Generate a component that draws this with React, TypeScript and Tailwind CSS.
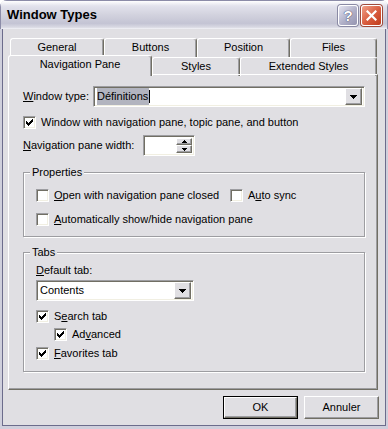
import React from "react";

const font = { fontFamily: '"Liberation Sans", Arial, sans-serif' };

function Check() {
  const px: [number, number, number][] = [
    [6, 0, 1], [5, 1, 2], [0, 2, 1], [4, 2, 3], [0, 3, 2], [3, 3, 3], [0, 4, 5], [1, 5, 3], [2, 6, 1],
  ];
  return (
    <svg width="7" height="7" viewBox="0 0 7 7" shapeRendering="crispEdges">
      {px.map(([x, y, w], i) => (
        <rect key={i} x={x} y={y} width={w} height={1} fill="#000" />
      ))}
    </svg>
  );
}

function CheckBox({ checked, children }: { checked?: boolean; children: React.ReactNode }) {
  return (
    <div className="flex h-[13px] items-center">
      <div className="flex h-[13px] w-[13px] items-center justify-center border border-t-[#9d9da1] border-l-[#9d9da1] border-r-white border-b-white bg-white shadow-[inset_1px_1px_0_#716f64,inset_-1px_-1px_0_#f1efe2]">
        {checked && <Check />}
      </div>
      <span className="ml-[5px] text-[11px] leading-[13px] text-black">{children}</span>
    </div>
  );
}

function Arrow() {
  return (
    <svg width="7" height="4" viewBox="0 0 7 4" shapeRendering="crispEdges">
      <path d="M0 0h7v1H6v1H5v1H4v1H3V3H2V2H1V1H0z" fill="#000" />
    </svg>
  );
}

const raised =
  "border border-t-white border-l-white border-r-[#716f64] border-b-[#716f64] bg-[#e0dfe3] shadow-[inset_-1px_-1px_0_#9d9da1]";
const sunken =
  "border border-t-[#9d9da1] border-l-[#9d9da1] border-r-white border-b-white shadow-[inset_1px_1px_0_#716f64,inset_-1px_-1px_0_#f1efe2]";

function Combo({ width, children }: { width: string; children: React.ReactNode }) {
  return (
    <div className={`flex h-[21px] items-center bg-white p-[2px] ${sunken} ${width}`}>
      <div className="flex flex-1 items-center pl-[1px] text-[11px] text-black">{children}</div>
      <div className={`flex h-[17px] w-[17px] items-center justify-center ${raised}`}>
        <Arrow />
      </div>
    </div>
  );
}

function U({ children }: { children: React.ReactNode }) {
  return <span className="underline underline-offset-[1px]">{children}</span>;
}

function Group({ label, className, children }: { label: string; className: string; children: React.ReactNode }) {
  return (
    <div className={`relative border border-[#9d9da1] shadow-[inset_1px_1px_0_#fff,1px_1px_0_#fff] ${className}`}>
      <span className="absolute -top-[7px] left-[6px] bg-[#e0dfe3] px-[2px] text-[11px] leading-[13px] text-black">
        {label}
      </span>
      {children}
    </div>
  );
}

function Tab({ w, children, selected }: { w: string; children: React.ReactNode; selected?: boolean }) {
  return (
    <div
      className={`flex items-start justify-center rounded-t-[3px] border-t border-l border-white border-r border-r-[#716f64] bg-[#e0dfe3] pt-[2px] text-[11px] leading-[13px] text-black shadow-[inset_-1px_0_0_#9d9da1] ${w} ${
        selected ? "relative z-10 -mt-[2px] h-[21px]" : "h-[19px]"
      }`}
    >
      {children}
    </div>
  );
}

export default function App() {
  return (
    <div className="h-[429px] w-[388px] bg-white" style={font}>
      <div className="flex h-[429px] w-[388px] flex-col overflow-hidden rounded-t-[7px] bg-[#cfcfdc]">
        <div className="flex h-[29px] items-center justify-between border-x border-t border-[#8c8ca8] bg-[linear-gradient(to_bottom,#ffffff_0%,#e2e2ec_18%,#d2d2de_50%,#c4c4d4_80%,#dadae4_94%,#f4f4f8_100%)] pl-[6px] pr-[5px]">
          <span className="text-[13px] font-bold text-black">Window Types</span>
          <div className="flex gap-[3px] pt-[1px]">
            <div className="flex h-[21px] w-[20px] items-center justify-center rounded-[3px] border border-white bg-[linear-gradient(135deg,#e4e4f0_0%,#b0b0c8_55%,#9494b0_100%)] shadow-[0_0_0_1px_#8a8aa4]">
              <span className="text-[15px] font-bold leading-none text-white [text-shadow:0_0_1px_#404060,0_0_1px_#404060]">?</span>
            </div>
            <div className="flex h-[21px] w-[21px] items-center justify-center rounded-[3px] border border-white bg-[linear-gradient(135deg,#f0a088_0%,#d85a3c_55%,#c03c1c_100%)] shadow-[0_0_0_1px_#a04a3a]">
              <svg width="11" height="11" viewBox="0 0 11 11">
                <path d="M1.5 1.5l8 8M9.5 1.5l-8 8" stroke="#fff" strokeWidth="2.2" strokeLinecap="square" />
              </svg>
            </div>
          </div>
        </div>
        <div className="flex flex-1 px-[2px] pb-[3px]">
          <div className="flex flex-1 flex-col border-x border-b border-[#6c6c8c] bg-[#e0dfe3] px-[5px] pt-[9px]">
            <div className="ml-[2px] flex h-[19px]">
              <Tab w="w-[94px]">General</Tab>
              <Tab w="w-[93px]">Buttons</Tab>
              <Tab w="w-[93px]">Position</Tab>
              <Tab w="w-[87px]">Files</Tab>
            </div>
            <div className="flex h-[17px] items-start">
              <Tab w="w-[144px]" selected>
                Navigation Pane
              </Tab>
              <Tab w="w-[88px]">Styles</Tab>
              <Tab w="w-[137px]">Extended Styles</Tab>
            </div>
            <div className="flex h-[316px] w-[370px] flex-col border border-t-white border-l-white border-r-[#716f64] border-b-[#716f64] pl-[14px] pt-[11px] text-[11px] text-black shadow-[inset_-1px_-1px_0_#9d9da1]">
              <div className="flex h-[21px] items-center">
                <span className="w-[70px]">
                  <U>W</U>indow type:
                </span>
                <Combo width="w-[272px]">
                  <span className="bg-[#b2b4bf] pr-[1px]">Définitions</span>
                  <span className="h-[13px] w-px bg-black" />
                </Combo>
              </div>
              <div className="mt-[9px]">
                <CheckBox checked>Window with navigation pane, topic pane, and button</CheckBox>
              </div>
              <div className="mt-[6px] flex h-[21px] items-center">
                <span className="w-[120px]">
                  <U>N</U>avigation pane width:
                </span>
                <div className={`flex h-[21px] w-[52px] bg-white p-[2px] ${sunken}`}>
                  <div className="flex-1" />
                  <div className="flex w-[16px] flex-col">
                    <div className={`flex h-[8px] items-center justify-center ${raised}`}>
                      <svg width="5" height="3" viewBox="0 0 5 3" shapeRendering="crispEdges">
                        <path d="M2 0h1v1h1v1h1v1H0V2h1V1h1z" fill="#000" />
                      </svg>
                    </div>
                    <div className={`flex h-[9px] items-center justify-center ${raised}`}>
                      <svg width="5" height="3" viewBox="0 0 5 3" shapeRendering="crispEdges">
                        <path d="M0 0h5v1H4v1H3v1H2V2H1V1H0z" fill="#000" />
                      </svg>
                    </div>
                  </div>
                </div>
              </div>
              <Group label="Properties" className="mt-[16px] h-[65px] w-[342px] pl-[12px] pt-[16px]">
                <div className="flex">
                  <div className="w-[194px]">
                    <CheckBox>
                      <U>O</U>pen with navigation pane closed
                    </CheckBox>
                  </div>
                  <CheckBox>
                    A<U>u</U>to sync
                  </CheckBox>
                </div>
                <div className="mt-[11px]">
                  <CheckBox>
                    <U>A</U>utomatically show/hide navigation pane
                  </CheckBox>
                </div>
              </Group>
              <Group label="Tabs" className="mt-[15px] h-[120px] w-[342px] pl-[12px] pt-[11px]">
                <div className="h-[13px] leading-[13px]">
                  <U>D</U>efault tab:
                </div>
                <div className="mt-[3px]">
                  <Combo width="w-[158px]">Contents</Combo>
                </div>
                <div className="mt-[9px]">
                  <CheckBox checked>
                    S<U>e</U>arch tab
                  </CheckBox>
                </div>
                <div className="ml-[18px] mt-[5px]">
                  <CheckBox checked>
                    Ad<U>v</U>anced
                  </CheckBox>
                </div>
                <div className="mt-[6px]">
                  <CheckBox checked>
                    <U>F</U>avorites tab
                  </CheckBox>
                </div>
              </Group>
            </div>
            <div className="mt-[6px] flex justify-end gap-[6px] pr-[1px]">
              <div className="border border-black">
                <div className={`flex h-[21px] w-[73px] items-center justify-center text-[11px] text-black ${raised}`}>OK</div>
              </div>
              <div className={`flex h-[23px] w-[75px] items-center justify-center text-[11px] text-black ${raised}`}>
                Annuler
              </div>
            </div>
          </div>
        </div>
      </div>
    </div>
  );
}
